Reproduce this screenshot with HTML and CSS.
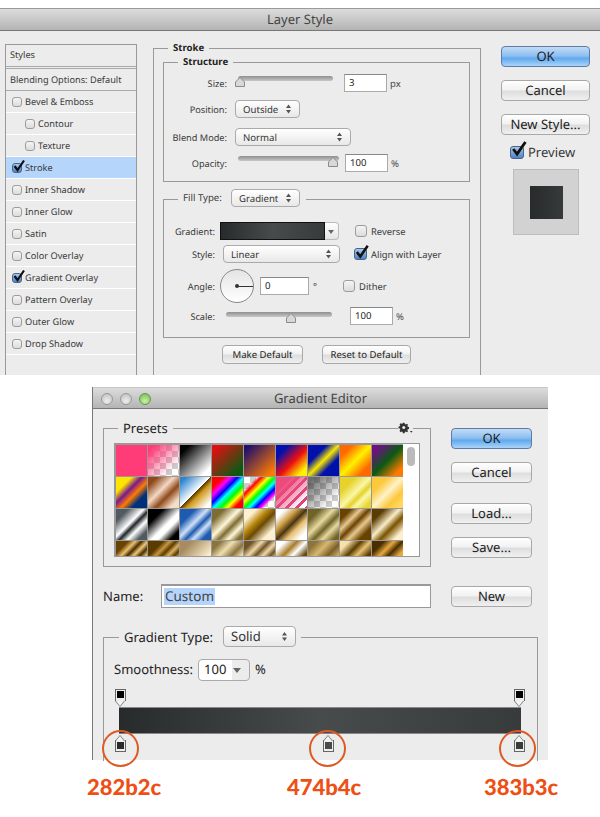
FILE: index.html
```html
<!DOCTYPE html>
<html lang="en">
<head>
<meta charset="utf-8">
<title>Layer Style and Gradient Editor</title>
<link rel="stylesheet" href="styles.css">
</head>
<body>
<svg class="sprites" aria-hidden="true">
  <symbol id="chev" viewBox="0 0 7 10"><path d="M3.5 0.5 6 4H1zM3.5 9.5 1 6h5z" fill="#555"/></symbol>
  <symbol id="tick" viewBox="0 0 14 14"><path d="M2.5 7 L5.5 11 L12 1.5" fill="none" stroke="#111" stroke-width="2.2"/></symbol>
  <symbol id="thumb" viewBox="0 0 10 10"><path d="M5 .5 9.5 5v4.5H.5V5z" fill="#d8d8d8" stroke="#8a8a8a"/></symbol>
</svg>

<section class="dialog layer">
  <header class="title">Layer Style</header>
  <div class="layer-body">
    <nav class="styles">
      <div class="style-head">Styles</div>
      <div class="style-head second">Blending Options: Default</div>
      <div class="style-row"><span class="cb"></span>Bevel &amp; Emboss</div>
      <div class="style-row sub"><span class="cb"></span>Contour</div>
      <div class="style-row sub"><span class="cb"></span>Texture</div>
      <div class="style-row active"><span class="cb on"><svg class="tick"><use href="#tick"/></svg></span>Stroke</div>
      <div class="style-row"><span class="cb"></span>Inner Shadow</div>
      <div class="style-row"><span class="cb"></span>Inner Glow</div>
      <div class="style-row"><span class="cb"></span>Satin</div>
      <div class="style-row"><span class="cb"></span>Color Overlay</div>
      <div class="style-row"><span class="cb on"><svg class="tick"><use href="#tick"/></svg></span>Gradient Overlay</div>
      <div class="style-row"><span class="cb"></span>Pattern Overlay</div>
      <div class="style-row"><span class="cb"></span>Outer Glow</div>
      <div class="style-row"><span class="cb"></span>Drop Shadow</div>
    </nav>

    <div class="group stroke open">
      <div class="legend bold">Stroke</div>
      <div class="group structure">
        <div class="legend bold">Structure</div>
        <div class="row r-size">
          <span class="lab lab-s">Size:</span>
          <div class="slider sl-size"><div class="track"></div><svg class="thumb th-size"><use href="#thumb"/></svg></div>
          <span class="input in-s">3</span><span class="unit">px</span>
        </div>
        <div class="row r-pos">
          <span class="lab lab-s">Position:</span>
          <span class="select sel-pos">Outside<svg class="chev"><use href="#chev"/></svg></span>
        </div>
        <div class="row r-blend">
          <span class="lab lab-s">Blend Mode:</span>
          <span class="select sel-blend">Normal<svg class="chev"><use href="#chev"/></svg></span>
        </div>
        <div class="row r-op">
          <span class="lab lab-s">Opacity:</span>
          <div class="slider sl-op"><div class="track"></div><svg class="thumb th-op"><use href="#thumb"/></svg></div>
          <span class="input in-op">100</span><span class="unit">%</span>
        </div>
      </div>

      <div class="group fill">
        <div class="legend legend-fill"><span class="fill-lab">Fill Type:</span><span class="select sel-fill">Gradient<svg class="chev"><use href="#chev"/></svg></span></div>
        <div class="row r-grad">
          <span class="lab lab-f">Gradient:</span>
          <span class="swatch"></span><span class="drop"></span>
          <span class="cb c-rev"></span><span class="cb-text">Reverse</span>
        </div>
        <div class="row r-style">
          <span class="lab lab-f">Style:</span>
          <span class="select sel-style">Linear<svg class="chev"><use href="#chev"/></svg></span>
          <span class="cb c-align on"><svg class="tick"><use href="#tick"/></svg></span><span class="cb-text">Align with Layer</span>
        </div>
        <div class="row r-angle">
          <span class="lab lab-f">Angle:</span>
          <span class="dial"><span class="dial-dot"></span><span class="dial-hand"></span></span>
          <span class="input in-ang">0</span><span class="unit deg">°</span>
          <span class="cb c-dither"></span><span class="cb-text">Dither</span>
        </div>
        <div class="row r-scale">
          <span class="lab lab-f">Scale:</span>
          <div class="slider sl-scale"><div class="track"></div><svg class="thumb th-scale"><use href="#thumb"/></svg></div>
          <span class="input in-sc">100</span><span class="unit">%</span>
        </div>
      </div>

      <div class="defaults">
        <span class="btn small b-make">Make Default</span>
        <span class="btn small b-reset">Reset to Default</span>
      </div>
    </div>

    <aside class="side">
      <span class="btn primary b-l">OK</span>
      <span class="btn b-l">Cancel</span>
      <span class="btn b-l">New Style...</span>
      <div class="preview-check"><span class="cb big on"><svg class="tick big-tick"><use href="#tick"/></svg></span>Preview</div>
      <div class="preview"><div class="preview-inner"></div></div>
    </aside>
  </div>
</section>

<section class="dialog editor">
  <header class="title">
    <span class="lights"><i class="light"></i><i class="light"></i><i class="light green"></i></span>
    Gradient Editor
  </header>
  <div class="ed-top">
    <div class="ed-left">
      <div class="group presets">
        <div class="legend legend-big">Presets</div>
        <svg class="gear" viewBox="0 0 17 13" aria-hidden="true">
          <path d="M5.5 0.5h2l.3 1.4 1.2.5 1.2-.8 1.2 1.2-.8 1.2.5 1.2 1.4.3v2l-1.4.3-.5 1.2.8 1.2-1.2 1.2-1.2-.8-1.2.5-.3 1.4h-2l-.3-1.4-1.2-.5-1.2.8L1.7 9.6l.8-1.2-.5-1.2L.6 6.9v-2L2 4.6l.5-1.2-.8-1.2L2.9 1l1.2.8 1.2-.5z" fill="#333"/>
          <circle cx="6.5" cy="5.9" r="1.7" fill="#ececec"/>
          <path d="M13.5 10h3L15 11.8z" fill="#333"/>
        </svg>
        <div class="swatches">
          <div class="grid">
            <i class="p p1"></i><i class="p p2"></i><i class="p p3"></i><i class="p p4"></i><i class="p p5"></i><i class="p p6"></i><i class="p p7"></i><i class="p p8"></i><i class="p p9"></i>
            <i class="p p10"></i><i class="p p11"></i><i class="p p12"></i><i class="p p13"></i><i class="p p14"></i><i class="p p15"></i><i class="p p16"></i><i class="p p17"></i><i class="p p18"></i>
            <i class="p p19"></i><i class="p p20"></i><i class="p p21"></i><i class="p p22"></i><i class="p p23"></i><i class="p p24"></i><i class="p p25"></i><i class="p p26"></i><i class="p p27"></i>
            <i class="p p28"></i><i class="p p29"></i><i class="p p30"></i><i class="p p31"></i><i class="p p32"></i><i class="p p33"></i><i class="p p34"></i><i class="p p35"></i><i class="p p36"></i>
          </div>
          <div class="scroll"><div class="scroll-thumb"></div></div>
        </div>
      </div>
      <div class="name-row">
        <span class="name-lab">Name:</span>
        <span class="name-input"><span class="selected">Custom</span></span>
      </div>
    </div>
    <div class="ed-side">
      <span class="btn primary b-e">OK</span>
      <span class="btn b-e m-cancel">Cancel</span>
      <span class="btn b-e m-load">Load...</span>
      <span class="btn b-e m-save">Save...</span>
      <span class="btn b-e m-new">New</span>
    </div>
  </div>

  <div class="group gtype open">
    <div class="legend legend-big legend-type"><span class="type-lab">Gradient Type:</span><span class="select sel-type">Solid<svg class="chev"><use href="#chev"/></svg></span></div>
    <div class="smooth">
      <span>Smoothness:</span>
      <span class="combo">100<span class="combo-arrow"></span></span>
      <span>%</span>
    </div>
    <div class="ramp">
      <span class="stop top s-left"><i class="chip black"></i></span>
      <span class="stop top s-right"><i class="chip black"></i></span>
      <div class="bar"></div>
      <span class="stop bottom s-left"><i class="chip c1"></i></span>
      <span class="stop bottom s-mid"><i class="chip c2"></i></span>
      <span class="stop bottom s-right"><i class="chip c3"></i></span>
      <span class="ring ring-1"></span>
      <span class="ring ring-2"></span>
      <span class="ring ring-3"></span>
    </div>
  </div>
</section>

<div class="hexes">
  <span class="hex">282b2c</span>
  <span class="hex">474b4c</span>
  <span class="hex">383b3c</span>
</div>
</body>
</html>
```
FILE: styles.css
```css
* { box-sizing: border-box; }
html, body { margin: 0; padding: 0; height: 817px; overflow: hidden; background: #fff; }
body { font-family: "Noto Sans", sans-serif; font-size: 9.6px; color: #3a3a3a; text-rendering: geometricPrecision; }
.sprites { display: none; }

.dialog { background: #ececec; position: relative; }
.layer { margin-top: 8px; height: 367px; overflow: hidden; }
.editor { margin: 12px 0 0 92px; width: 456px; height: 373px; border-left: 1px solid #777; }

.title {
  height: 23px; line-height: 21px; text-align: center; font-size: 13px; color: #444;
  border-top: 1px solid #9a9a9a; border-bottom: 1px solid #777;
  background: linear-gradient(#dcdcdc, #b4b4b4);
  position: relative;
}
.editor .title { height: 22px; line-height: 20px; border-top-color: #c8c8c8; }

/* top dialog */
.layer-body { display: flex; align-items: flex-start; height: 344px; }
.styles { margin: 13px 0 0 5px; width: 132px; height: 340px; border: 1px solid #999; border-bottom: 0; flex: none; font-size: 9.2px; }
.style-head { height: 22px; line-height: 20px; padding-left: 4px; border-bottom: 1px solid #aaa; white-space: nowrap; }
.style-head.second { height: 23px; line-height: 22px; border-top: 1px solid #aaa; margin-top: 1px; }
.style-row { height: 22px; display: flex; align-items: center; padding-left: 6px; border-bottom: 1px solid #fff; }
.style-row.sub { padding-left: 19px; }
.style-row.active { background: #b5d5fb; }

.cb { width: 10px; height: 10px; flex: none; border: 1px solid #9c9c9c; border-radius: 3px; background: linear-gradient(#f4f4f4, #dcdcdc); margin-right: 3px; position: relative; display: inline-block; }
.cb.on { background: linear-gradient(#a9c7ea, #4c83c4); border-color: #47658c; }
.tick { position: absolute; left: -1px; top: -5px; width: 14px; height: 14px; }
.cb.big { width: 14px; height: 13px; margin-right: 4px; }
.big-tick { left: -1px; top: -7px; width: 18px; height: 18px; }

.group { border: 1px solid #999; position: relative; }
.group.open { border-bottom: 0; }
.legend { position: absolute; top: -8px; left: 14px; padding: 0 5px; background: #ececec; line-height: 14px; white-space: nowrap; }
.bold { font-weight: 700; color: #222; }

.stroke { margin: 17px 0 0 16px; width: 328px; height: 330px; padding: 13px 10px 0 9px; flex: none; }
.structure { height: 120px; padding-top: 11px; }

.row { display: flex; align-items: center; height: 18px; }
.lab { flex: none; text-align: right; white-space: nowrap; font-size: 9.2px; }
.lab-s { width: 63px; margin-right: 8px; }
.lab-f { width: 51px; margin-right: 5px; }
.r-pos { margin-top: 8px; }
.r-blend { margin-top: 10px; }
.r-op { margin-top: 8px; }

.select {
  height: 18px; line-height: 17px; padding-left: 7px; border: 1px solid #aaa; border-radius: 4px;
  background: linear-gradient(#fff, #e8e8e8); position: relative; display: inline-block; flex: none; color: #333;
}
.chev { position: absolute; right: 7px; top: 3px; width: 7px; height: 10px; }
.sel-pos { width: 65px; }
.sel-blend { width: 116px; }
.sel-fill { width: 69px; margin-left: 9px; }
.fill-lab { width: 39px; flex: none; }
.sel-style { width: 117px; margin-left: 3px; }
.type-lab { width: 91px; flex: none; }
.sel-type { width: 73px; height: 21px; line-height: 19px; margin-left: 8px; font-size: 13px; }
.sel-type .chev { top: 4px; right: 7px; height: 11px; }

.slider { position: relative; height: 14px; align-self: flex-start; margin-top: 2px; flex: none; }
.track { position: absolute; top: 0; left: 3px; right: 0; height: 5px; border-radius: 3px; background: linear-gradient(#8f8f8f, #c8c8c8); }
.thumb { position: absolute; width: 10px; height: 10px; top: 1px; }
.sl-size { width: 98px; margin-right: 11px; }
.th-size { left: 0; }
.sl-op { width: 104px; margin-right: 6px; }
.th-op { left: 93px; }
.sl-scale { width: 106px; margin: 5px 18px 0 6px; }
.sl-scale .track { left: 0; }
.th-scale { left: 60px; }

.input { height: 18px; line-height: 15px; padding-left: 4px; background: #fff; border: 1px solid #aaa; border-top-color: #888; flex: none; color: #222; }
.in-s { width: 43px; }
.in-op { width: 43px; }
.in-ang { width: 49px; margin-left: 6px; }
.in-sc { width: 43px; }
.unit { margin-left: 3px; font-size: 9.5px; color: #444; }
.deg { margin-left: 4px; }

.fill { height: 139px; margin-top: 17px; padding-top: 22px; }
.legend-fill { top: -11px; height: 18px; display: flex; align-items: center; padding-right: 6px; }
.swatch { width: 105px; height: 18px; border: 1px solid #111; flex: none; background: linear-gradient(90deg, #282b2c, #474b4c 50%, #383b3c); }
.drop { width: 14px; height: 18px; flex: none; border: 1px solid #bbb; border-left: 0; border-radius: 0 4px 4px 0; background: linear-gradient(#fff, #e4e4e4); position: relative; }
.drop::after { content: ""; position: absolute; left: 3px; top: 7px; border: 3.5px solid transparent; border-top: 4px solid #666; border-bottom: 0; }
.c-rev { margin-left: 16px; width: 12px; height: 12px; margin-right: 4px; }
.c-align { margin-left: 14px; width: 13px; height: 12px; margin-right: 4px; }
.c-align .tick { left: -1px; top: -5px; width: 16px; height: 16px; }
.c-dither { margin-left: 26px; width: 12px; height: 12px; margin-right: 4px; }
.cb-text { font-size: 9.4px; }
.r-style { margin-top: 5px; }
.r-angle { margin-top: 6px; height: 34px; }
.r-scale { margin-top: 4px; }
.dial { width: 34px; height: 34px; flex: none; border: 1px solid #888; border-radius: 50%; background: linear-gradient(#e4e4e4, #fff); position: relative; }
.dial-dot { position: absolute; left: 14px; top: 14px; width: 4px; height: 4px; border-radius: 50%; background: #333; }
.dial-hand { position: absolute; left: 16px; top: 15.5px; width: 16px; height: 1px; background: #333; }

.defaults { display: flex; gap: 19px; margin: 7px 0 0 59px; }
.btn {
  display: flex; align-items: center; justify-content: center; flex: none; border: 1px solid #a8a8a8; border-radius: 4px; padding-bottom: 2px;
  background: linear-gradient(#fff 0, #f2f2f2 45%, #dedede 55%, #f0f0f0 100%); color: #222; white-space: nowrap;
}
.btn.primary { background: linear-gradient(#c3dcf6 0, #8fc0f1 45%, #62a9ee 60%, #aad4f9 100%); border-color: #5d7ba5; }
.small { height: 19px; padding-bottom: 0; }
.b-make { width: 81px; }
.b-reset { width: 89px; }

.side { margin: 15px 0 0 20px; width: 89px; flex: none; display: flex; flex-direction: column; }
.b-l { width: 89px; height: 21px; margin-bottom: 13px; font-size: 13px; }
.preview-check { display: flex; align-items: center; margin: -4px 0 0 9px; height: 16px; font-size: 13px; }
.preview { width: 66px; height: 66px; margin: 9px 0 0 12px; background: #d2d2d2; border: 1px solid #bdbdbd; padding: 16px; }
.preview-inner { width: 33px; height: 33px; background: linear-gradient(90deg, #282b2c, #373a3b); }

/* gradient editor */
.lights { position: absolute; left: 8px; top: 5px; display: flex; gap: 7px; }
.light { width: 12px; height: 12px; border-radius: 50%; border: 1px solid #999; background: radial-gradient(circle at 50% 70%, #eee, #bbb); }
.light.green { border-color: #5f9a4f; background: radial-gradient(circle at 50% 70%, #cdf0a8, #6fb84c); }

.ed-top { display: flex; align-items: flex-start; padding: 19px 0 0 10px; }
.ed-left { width: 328px; flex: none; }
.presets { height: 139px; padding: 14px 0 0 10px; }
.legend-big { font-size: 13px; color: #222; line-height: 16px; top: -9px; }
.presets .legend { left: 14px; }
.gear { position: absolute; right: 17px; top: -7px; width: 15px; height: 12px; background: #ececec; }
.swatches { width: 306px; height: 114px; border: 1px solid #999; display: flex; overflow: hidden; background: #999; }
.grid { display: grid; grid-template-columns: repeat(9, 31px); grid-auto-rows: 31px; gap: 1px; width: 287px; padding: 1px 0 0 1px; flex: none; }
.scroll { flex: 1; background: #fff; margin-left: 1px; position: relative; }
.scroll-thumb { position: absolute; left: 4px; top: 3px; width: 8px; height: 19px; border-radius: 4px; background: #bbb; }

.name-row { display: flex; align-items: center; margin-top: 17px; height: 24px; font-size: 13px; }
.name-lab { width: 58px; flex: none; color: #222; }
.name-input { width: 270px; height: 24px; border: 1px solid #999; border-top-width: 2px; background: #fff; padding-left: 2px; display: flex; align-items: center; color: #444; }
.selected { background: #b4d4fb; padding: 0 1px; line-height: 17px; font-size: 13.5px; }

.ed-side { margin-left: 20px; width: 81px; flex: none; display: flex; flex-direction: column; }
.b-e { width: 81px; height: 21px; font-size: 13px; }
.m-cancel { margin-top: 13px; }
.m-load { margin-top: 20px; }
.m-save { margin-top: 13px; }
.m-new { margin-top: 28px; }

.gtype { margin: 29px 0 0 10px; width: 435px; height: 124px; }
.legend-type { top: -12px; left: 15px; display: flex; align-items: center; height: 21px; padding: 0 5px; }
.smooth { display: flex; align-items: center; gap: 5px; margin: 21px 0 0 10px; height: 22px; padding-bottom: 2px; font-size: 13px; color: #222; }
.combo { width: 52px; height: 22px; align-self: flex-start; border: 1px solid #aaa; border-radius: 4px; background: linear-gradient(90deg, #fff 65%, #ececec 65%); padding-left: 5px; line-height: 18px; position: relative; }
.combo-arrow { position: absolute; right: 8px; top: 8px; border: 4px solid transparent; border-top: 5px solid #666; border-bottom: 0; }

.ramp { position: relative; margin: 26px 0 0 15px; width: 402px; height: 27px; }
.bar { height: 27px; border-top: 1px solid #888; border-bottom: 1px solid #888; background: linear-gradient(90deg, #282b2c, #474b4c 50%, #383b3c); }
.stop { position: absolute; width: 11px; height: 12px; border: 1px solid #666; background: #eee; }
.stop.top { top: -18px; border-bottom: 0; }
.stop.top::before { content: ""; position: absolute; left: -1px; top: 11px; border-left: 5.5px solid transparent; border-right: 5.5px solid transparent; border-top: 6px solid #777; }
.stop.top::after { content: ""; position: absolute; left: 0; top: 11px; border-left: 4.5px solid transparent; border-right: 4.5px solid transparent; border-top: 5px solid #f4f4f4; }
.stop.bottom { top: 33px; border-top: 0; }
.stop.bottom::before { content: ""; position: absolute; left: -1px; top: -5px; border-left: 5.5px solid transparent; border-right: 5.5px solid transparent; border-bottom: 6px solid #777; }
.stop.bottom::after { content: ""; position: absolute; left: 0; top: -4px; border-left: 4.5px solid transparent; border-right: 4.5px solid transparent; border-bottom: 5px solid #f4f4f4; }
.s-left { left: -4px; }
.s-mid { left: 204px; }
.s-right { left: 395px; }
.chip { position: absolute; left: 1px; top: 1px; width: 7px; height: 7px; z-index: 1; }
.stop.bottom .chip { top: 2px; }
.black { background: #000; }
.c1 { background: #282b2c; }
.c2 { background: #474b4c; }
.c3 { background: #383b3c; }
.ring { position: absolute; top: 23px; width: 37px; height: 37px; border: 2px solid #de5a24; border-radius: 50%; }
.ring-1 { left: -17px; }
.ring-2 { left: 190px; }
.ring-3 { left: 380px; }

.hexes { display: flex; padding: 14px 0 0 87px; font-family: Lato, sans-serif; font-weight: 900; font-size: 22px; line-height: 26px; color: #ee4f14; }
.hex { width: 74px; flex: none; white-space: nowrap; }
.hex:nth-child(2) { margin-left: 126px; }
.hex:nth-child(3) { margin-left: 123px; }

/* presets */
.p { display: block; }
.p1 { background: #ff3b78; }
.p2 { background: linear-gradient(135deg, #ff3b78 10%, rgba(255,59,120,0) 80%), repeating-conic-gradient(#ccc 0 25%, #fff 0 50%) 0 0/12px 12px; }
.p3 { background: linear-gradient(135deg, #000 15%, #fff 85%); }
.p4 { background: linear-gradient(135deg, #e01010 10%, #0b5a12 85%); }
.p5 { background: linear-gradient(135deg, #20106c 10%, #ff7a00 90%); }
.p6 { background: linear-gradient(135deg, #0010b0 20%, #ee0f0f 55%, #fff200 85%); }
.p7 { background: linear-gradient(135deg, #0010a8 30%, #f7e600 50%, #0010a8 70%); }
.p8 { background: linear-gradient(135deg, #ff6a00 20%, #fff200 50%, #ff6a00 80%); }
.p9 { background: linear-gradient(135deg, #6a1280 15%, #0b5a12 50%, #ff7a00 85%); }
.p10 { background: linear-gradient(135deg, #ffe400 25%, #7a1b8c 42%, #ff7a00 58%, #00307a 75%); }
.p11 { background: linear-gradient(135deg, #8f4a1a 15%, #f3d8c4 42%, #8f4a1a 62%, #f6ddca 85%); }
.p12 { background: linear-gradient(135deg, #2f86d0 10%, #fff 49%, #5a3a00 50%, #d09a1a 60%, #fff 90%); }
.p13 { background: linear-gradient(135deg, #f00 18%, #f0f 30%, #00f 42%, #0ff 52%, #0f0 64%, #ff0 74%, #f00 86%); }
.p14 { background: linear-gradient(135deg, transparent 20%, #f00 28%, #ff0 40%, #0f0 50%, #0ff 58%, #00f 68%, #f0f 76%, transparent 82%), repeating-conic-gradient(#ccc 0 25%, #fff 0 50%) 0 0/12px 12px; }
.p15 { background: linear-gradient(135deg, #ec4a7c 25%, rgba(236,74,124,0) 85%), repeating-linear-gradient(135deg, #e0407a 0 3px, #fff 3px 7px); }
.p16 { background: linear-gradient(135deg, rgba(60,60,60,.75) 10%, rgba(60,60,60,0) 80%), repeating-conic-gradient(#ccc 0 25%, #fff 0 50%) 0 0/12px 12px; }
.p17 { background: linear-gradient(135deg, #e6d22a 25%, #fbf7a8 50%, #e6d22a 62%, #fbf7a8 72%, #e8d430 90%); }
.p18 { background: linear-gradient(135deg, #fcc83c 25%, #fff2c8 50%, #fcc83c 72%, #ffd760 90%); }
.p19 { background: linear-gradient(135deg, #515a60 20%, #fff 45%, #20262a 55%, #fff 68%, #515a60 85%); }
.p20 { background: linear-gradient(135deg, #000 25%, #fff 55%, #fff 65%, #000 85%); }
.p21 { background: linear-gradient(135deg, #1f5cb0 25%, #cfe0f8 45%, #1f5cb0 58%, #cfe0f8 70%, #1f5cb0 85%); }
.p22 { background: linear-gradient(135deg, #7d6c33 20%, #fff7d8 45%, #7d6c33 60%, #fff7d8 75%, #7d6c33 90%); }
.p23 { background: linear-gradient(135deg, #fdf0d0 20%, #b8860b 40%, #6a4a05 55%, #fdf0d0 80%); }
.p24 { background: linear-gradient(135deg, #fff 15%, #c89a40 35%, #4a3410 50%, #e8c070 65%, #fff 85%); }
.p25 { background: linear-gradient(135deg, #6e6428 20%, #e8d8a0 42%, #6e6428 58%, #e8d8a0 72%, #6e6428 90%); }
.p26 { background: linear-gradient(135deg, #6a4200 18%, #e8c890 34%, #6a4200 48%, #e8c890 62%, #6a4200 80%); }
.p27 { background: linear-gradient(135deg, #5a3c00 20%, #f8ecc8 45%, #7a5200 62%, #fdf0d0 85%); }
.p28 { background: linear-gradient(135deg, #6a4200 20%, #e8c070 32%, #4a2e00 42%, #f0c878 52%, #4a2e00 62%, #e8c070 72%, #6a4200 85%); }
.p29 { background: linear-gradient(135deg, #5a3c00 25%, #c8963c 36%, #5a3c00 46%, #e0b060 56%, #5a3c00 66%, #e0b060 76%); }
.p30 { background: linear-gradient(135deg, #a88c60 20%, #fbeed0 70%); }
.p31 { background: linear-gradient(135deg, #8a7440 15%, #f0e0b0 35%, #8a7440 55%, #f0e0b0 72%); }
.p32 { background: linear-gradient(135deg, #705428 15%, #f0d8a8 30%, #705428 42%, #f0d8a8 54%, #705428 66%, #f0d8a8 78%); }
.p33 { background: linear-gradient(135deg, #fff 15%, #a87c28 35%, #fff 50%, #6a4a10 68%); }
.p34 { background: linear-gradient(135deg, #8e7438 15%, #d8b870 35%, #7a6028 55%, #d8b870 75%); }
.p35 { background: linear-gradient(135deg, #f8e0a8 15%, #5a3c00 35%, #e8c070 50%, #5a3c00 68%); }
.p36 { background: linear-gradient(135deg, #4a2e00 20%, #e8a840 36%, #4a2e00 50%, #e8a840 66%); }
```
